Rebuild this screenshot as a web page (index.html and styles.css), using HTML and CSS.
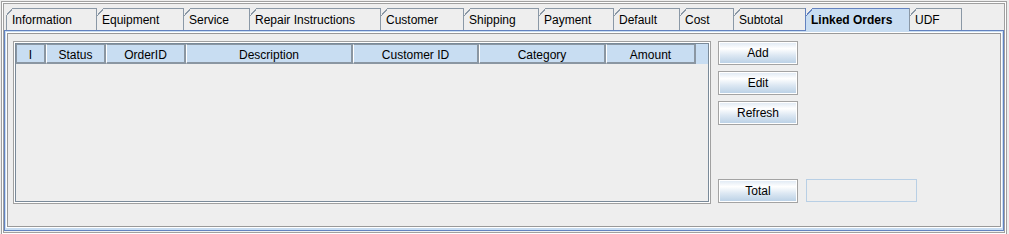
FILE: index.html
```html
<!DOCTYPE html>
<html>
    <head>
        <title>Linked Orders</title>
        <link rel="stylesheet" href="styles.css">
    </head>
    <body>
        <div class="frame">
            <div class="tabpane">
                <div class="tabs">
                    <div class="tab first">Information</div>
                    <div class="tab">Equipment</div>
                    <div class="tab">Service</div>
                    <div class="tab">Repair Instructions</div>
                    <div class="tab">Customer</div>
                    <div class="tab">Shipping</div>
                    <div class="tab">Payment</div>
                    <div class="tab">Default</div>
                    <div class="tab">Cost</div>
                    <div class="tab">Subtotal</div>
                    <div class="tab selected">Linked Orders</div>
                    <div class="tab last">UDF</div>
                </div>
                <div class="content">
                    <div class="panel">
                        <div class="table">
                            <div class="table-inner">
                                <div class="thead">
                                    <div class="th first">I</div>
                                    <div class="th">Status</div>
                                    <div class="th">OrderID</div>
                                    <div class="th">Description</div>
                                    <div class="th">Customer ID</div>
                                    <div class="th">Category</div>
                                    <div class="th">Amount</div>
                                    <div class="th-fill"></div>
                                </div>
                            </div>
                        </div>
                        <div class="side">
                            <button class="btn">Add</button>
                            <button class="btn">Edit</button>
                            <button class="btn">Refresh</button>
                            <div class="total-row">
                                <button class="btn">Total</button>
                                <input class="field" type="text" readonly>
                            </div>
                        </div>
                    </div>
                </div>
            </div>
        </div>
    </body>
</html>
```

FILE: styles.css
```css
body {
    margin: 0;
    background-color: #eeeeee;
    font-family: "Liberation Sans", Arial, sans-serif;
    font-size: 12px;
    color: #000;
}
.frame {
    margin: 1px 2px 0 1px;
    border: 1px solid #a0a0a0;
    padding: 1px;
    background-color: #fff;
}
.tabpane {
    border: 1px solid #a0a0a0;
    padding: 4px 0 1px 0;
    background-color: #eeeeee;
}

/* tab strip */
.tabs {
    display: flex;
    align-items: flex-start;
    height: 22px;
    padding-left: 2px;
    position: relative;
    z-index: 1;
}
.tab {
    position: relative;
    box-sizing: border-box;
    height: 22px;
    border-top: 1px solid #8a98a6;
    border-left: 1px solid #8a98a6;
    padding: 1px 0 0 5px;
    line-height: 20px;
    white-space: nowrap;
    background-color: #eeeeee;
}
/* slanted top-left corner */
.tab::before {
    content: "";
    position: absolute;
    left: 0;
    top: -1px;
    width: 7px;
    height: 8px;
    background: linear-gradient(to bottom right, #eeeeee calc(50% - 0.6px), #8a98a6 calc(50% - 0.6px), #8a98a6 calc(50% + 0.6px), transparent calc(50% + 0.6px));
}
.tab.first::before {
    left: -1px;
}
.tab.selected {
    height: 23px;
    margin-bottom: -1px;
    font-weight: bold;
    background-color: #c8ddf2;
    border-color: #6382bf;
}
.tab.selected::before {
    background: linear-gradient(to bottom right, #eeeeee calc(50% - 0.6px), #6382bf calc(50% - 0.6px), #6382bf calc(50% + 0.6px), transparent calc(50% + 0.6px));
}
.tab.last {
    border-right: 1px solid #8a98a6;
}
.tab:nth-child(1) { width: 90px; }
.tab:nth-child(2) { width: 87px; }
.tab:nth-child(3) { width: 66px; }
.tab:nth-child(4) { width: 131px; }
.tab:nth-child(5) { width: 83px; }
.tab:nth-child(6) { width: 75px; }
.tab:nth-child(7) { width: 75px; }
.tab:nth-child(8) { width: 66px; }
.tab:nth-child(9) { width: 54px; }
.tab:nth-child(10) { width: 72px; }
.tab:nth-child(11) { width: 104px; }
.tab:nth-child(12) { width: 53px; }

/* tab content */
.content {
    box-sizing: border-box;
    height: 201px;
    border: 1px solid #6382bf;
    padding: 2px 2px 3px 2px;
    background-color: #c8ddf2;
}
.panel {
    box-sizing: border-box;
    height: 100%;
    display: flex;
    align-items: flex-start;
    padding: 7px 0 0 5px;
    border: 1px solid #999;
    box-shadow: 0 0 0 1px #fff;
    background-color: #eeeeee;
}

/* table */
.table {
    box-sizing: border-box;
    width: 698px;
    height: 163px;
    border: 1px solid #a0a0a0;
    padding: 1px;
    background-color: #fff;
}
.table-inner {
    box-sizing: border-box;
    height: 100%;
    border: 1px solid #7a8a99;
    background-color: #eeeeee;
}
.thead {
    display: flex;
    height: 20px;
    background-color: #c8ddf2;
}
.th {
    box-sizing: border-box;
    height: 20px;
    padding-top: 3px;
    line-height: 14px;
    text-align: center;
    border-top: 1px solid #8a96a2;
    border-bottom: 2px solid #8a96a2;
    border-right: 2px solid #8a96a2;
    border-left: 1px solid #fff;
    background-color: #c8ddf2;
}
.th.first {
    border-left-color: #8a96a2;
}
.th:nth-child(1) { width: 30px; }
.th:nth-child(2) { width: 60px; }
.th:nth-child(3) { width: 80px; }
.th:nth-child(4) { width: 167px; }
.th:nth-child(5) { width: 126px; }
.th:nth-child(6) { width: 127px; }
.th:nth-child(7) { width: 90px; }
.th-fill {
    flex: 1;
}

/* buttons on the right */
.side {
    margin-left: 7px;
    display: flex;
    flex-direction: column;
    gap: 6px;
}
.btn {
    box-sizing: border-box;
    width: 80px;
    height: 24px;
    margin: 0;
    padding: 1px 0 0 0;
    border: 1px solid #a3a3a3;
    box-shadow: inset 0 0 0 1px #fff;
    background: linear-gradient(#dde8f3 0%, #ffffff 30%, #dde8f3 60%, #b8cfe5 100%);
    font-family: "Liberation Sans", Arial, sans-serif;
    font-size: 12px;
    line-height: 21px;
    color: #000;
}
.total-row {
    margin-top: 48px;
    display: flex;
    align-items: flex-start;
    gap: 8px;
}
.field {
    box-sizing: border-box;
    width: 111px;
    height: 23px;
    margin: 0;
    border: 1px solid #b8cfe5;
    background-color: #eeeeee;
    outline: none;
}
```
